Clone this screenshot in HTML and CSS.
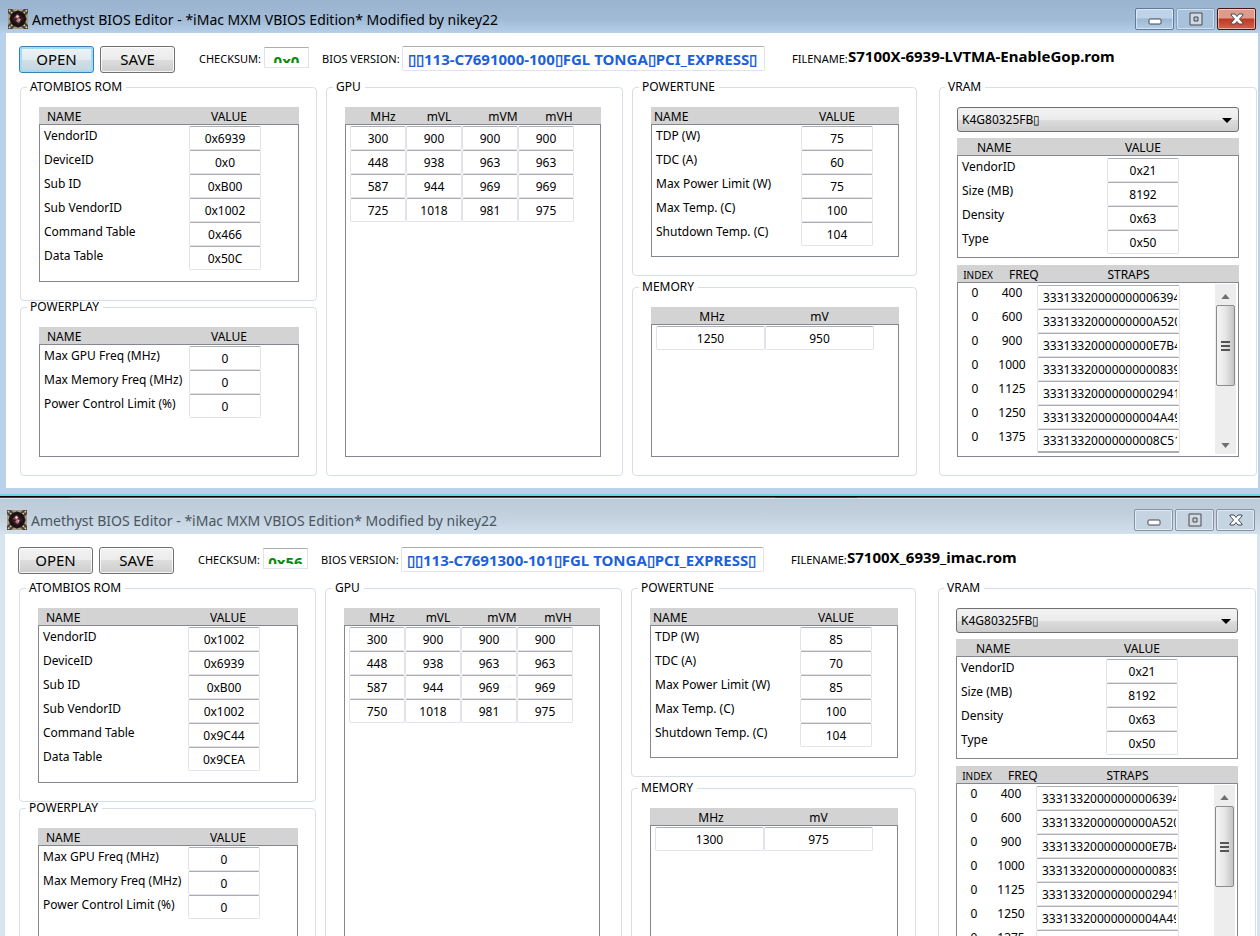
FILE: index.html
```html
<!DOCTYPE html>
<html lang="en">
<head>
<meta charset="UTF-8">
<meta name="viewport" content="width=device-width, initial-scale=1.0">
<title>Amethyst BIOS Editor</title>
<link rel="stylesheet" href="styles.css">
</head>
<body>
<main id="desktop"></main>

<script>
const TITLE = "Amethyst BIOS Editor - *iMac MXM VBIOS Edition* Modified by nikey22";

const straps = [
    [400, "33313320000000006394"],
    [600, "3331332000000000A520"],
    [900, "3331332000000000E7B4"],
    [1000, "33313320000000000839"],
    [1125, "33313320000000002941"],
    [1250, "33313320000000004A49"],
    [1375, "33313320000000008C51"]
];

const editors = [
    {
        id: "rom1",
        active: true,
        checksum: "0x0",
        version: "▯▯113-C7691000-100▯FGL TONGA▯PCI_EXPRESS▯",
        filename: "S7100X-6939-LVTMA-EnableGop.rom",
        rom: [["VendorID", "0x6939"], ["DeviceID", "0x0"], ["Sub ID", "0xB00"], ["Sub VendorID", "0x1002"], ["Command Table", "0x466"], ["Data Table", "0x50C"]],
        powerplay: [["Max GPU Freq (MHz)", "0"], ["Max Memory Freq (MHz)", "0"], ["Power Control Limit (%)", "0"]],
        gpu: [[300, 900, 900, 900], [448, 938, 963, 963], [587, 944, 969, 969], [725, 1018, 981, 975]],
        powertune: [["TDP (W)", "75"], ["TDC (A)", "60"], ["Max Power Limit (W)", "75"], ["Max Temp. (C)", "100"], ["Shutdown Temp. (C)", "104"]],
        memory: [[1250, 950]]
    },
    {
        id: "rom2",
        active: false,
        checksum: "0x56",
        version: "▯▯113-C7691300-101▯FGL TONGA▯PCI_EXPRESS▯",
        filename: "S7100X_6939_imac.rom",
        rom: [["VendorID", "0x1002"], ["DeviceID", "0x6939"], ["Sub ID", "0xB00"], ["Sub VendorID", "0x1002"], ["Command Table", "0x9C44"], ["Data Table", "0x9CEA"]],
        powerplay: [["Max GPU Freq (MHz)", "0"], ["Max Memory Freq (MHz)", "0"], ["Power Control Limit (%)", "0"]],
        gpu: [[300, 900, 900, 900], [448, 938, 963, 963], [587, 944, 969, 969], [750, 1018, 981, 975]],
        powertune: [["TDP (W)", "85"], ["TDC (A)", "70"], ["Max Power Limit (W)", "85"], ["Max Temp. (C)", "100"], ["Shutdown Temp. (C)", "104"]],
        memory: [[1300, 975]]
    }
];

const vram = [["VendorID", "0x21"], ["Size (MB)", "8192"], ["Density", "0x63"], ["Type", "0x50"]];

const appIcon = `
    <svg class="app-icon" viewBox="0 0 20 20" aria-hidden="true">
        <rect width="20" height="20" fill="#a89c84"/>
        <path d="M0 0h4l3 3 3-2 3 2 3-3h4v4l-3 3 2 3-2 3 3 3v4h-4l-3-3-3 2-3-2-3 3H0v-4l3-3-2-3 2-3-3-3z" fill="#4a4234"/>
        <path d="M1 1l4 4M19 1l-4 4M1 19l4-4M19 19l-4-4" stroke="#d8cdb2" stroke-width="1.5" stroke-dasharray="2 1"/>
        <circle cx="10" cy="10" r="8" fill="#1a1212"/>
        <path d="M10 4l6 6-6 6-6-6z" fill="#3a1a20"/>
        <path d="M9 5l3 3-3 2-3-1z" fill="#8c4a55"/>
        <path d="M10 9l3 1-2 4-3-2z" fill="#b08088"/>
        <path d="M8 7l2-1 1 2-2 1zM11 10l1 1-1 1z" fill="#f0dcdc"/>
    </svg>`;

// label / value lists
function nameTable(kind, rows, editor) {
    const body = rows.map((row, i) => {
        const id = `${editor.id}-${kind}-${i}`;
        return `<tr><td><label for="${id}">${row[0]}</label></td><td><input class="cell" id="${id}" value="${row[1]}"></td><td></td></tr>`;
    }).join("");
    return `
        <div class="list list-${kind}">
            <table>
                <colgroup><col class="col-name"><col class="col-value"><col></colgroup>
                <thead><tr><th class="th-name">NAME</th><th>VALUE</th><th></th></tr></thead>
                <tbody>${body}</tbody>
            </table>
        </div>`;
}

// plain grids of numbers
function gridTable(kind, heads, rows) {
    const body = rows.map(row =>
        `<tr>${row.map((v, i) => `<td><input class="cell" aria-label="${heads[i]}" value="${v}"></td>`).join("")}<td></td></tr>`
    ).join("");
    return `
        <div class="list list-${kind}">
            <table>
                <colgroup>${heads.map(() => `<col class="col-num">`).join("")}<col></colgroup>
                <thead><tr>${heads.map(h => `<th>${h}</th>`).join("")}<th></th></tr></thead>
                <tbody>${body}</tbody>
            </table>
        </div>`;
}

function strapsTable() {
    const body = straps.map(s =>
        `<tr><td>0</td><td>${s[0]}</td><td><input class="cell cell-strap" aria-label="Strap ${s[0]}" value="${s[1]}"></td><td></td></tr>`
    ).join("");
    return `
        <div class="list list-straps">
            <table>
                <colgroup><col class="col-index"><col class="col-freq"><col class="col-strap"><col></colgroup>
                <thead><tr><th class="th-index">INDEX</th><th class="th-freq">FREQ</th><th class="th-straps">STRAPS</th><th></th></tr></thead>
                <tbody>${body}</tbody>
            </table>
            <div class="scrollbar">
                <button class="scroll-arrow" aria-label="Scroll up"><svg viewBox="0 0 10 6"><path d="M0 6l5-6 5 6z"/></svg></button>
                <div class="scroll-thumb"><i></i><i></i><i></i></div>
                <button class="scroll-arrow scroll-down" aria-label="Scroll down"><svg viewBox="0 0 10 6"><path d="M0 0h10l-5 6z"/></svg></button>
            </div>
        </div>`;
}

function group(name, kind, content) {
    return `<fieldset class="group group-${kind}"><legend>${name}</legend>${content}</fieldset>`;
}

function renderEditor(e) {
    return `
    <section class="window ${e.active ? "window-active" : "window-inactive"}">
        <header class="titlebar">
            ${appIcon}
            <h1>${TITLE}</h1>
            <div class="window-buttons">
                <button class="wbtn" aria-label="Minimize"><svg viewBox="0 0 14 14"><rect x="1" y="7" width="12" height="5" rx="1"/></svg></button>
                <button class="wbtn wbtn-max" aria-label="Maximize"><svg viewBox="0 0 14 14"><path fill-rule="evenodd" d="M1 1h12v12H1zM5 5v4h4V5z"/></svg></button>
                <button class="wbtn wbtn-close" aria-label="Close"><svg viewBox="0 0 14 14"><path d="M1 2h4l2 2.500 2-2.500h4v1L9.500 7l3.500 4v1H9L7 9.500 5 12H1v-1l3.500-4L1 3z"/></svg></button>
            </div>
        </header>
        <div class="client">
            <div class="toolbar">
                <button class="btn btn-open">OPEN</button>
                <button class="btn">SAVE</button>
                <label class="lbl-checksum" for="${e.id}-checksum">CHECKSUM:</label>
                <div class="checksum"><div class="checksum-clip"><input id="${e.id}-checksum" value="${e.checksum}" readonly></div></div>
                <label class="lbl-version" for="${e.id}-version">BIOS VERSION:</label>
                <input class="version" id="${e.id}-version" value="${e.version}" readonly>
                <span class="lbl-file">FILENAME:</span>
                <strong class="filename">${e.filename}</strong>
            </div>
            <div class="panels">
                <div class="column">
                    ${group("ATOMBIOS ROM", "rom", nameTable("rom", e.rom, e))}
                    ${group("POWERPLAY", "powerplay", nameTable("powerplay", e.powerplay, e))}
                </div>
                <div class="column">
                    ${group("GPU", "gpu", gridTable("gpu", ["MHz", "mVL", "mVM", "mVH"], e.gpu))}
                </div>
                <div class="column column-power">
                    ${group("POWERTUNE", "powertune", nameTable("powertune", e.powertune, e))}
                    ${group("MEMORY", "memory", gridTable("memory", ["MHz", "mV"], e.memory))}
                </div>
                <div class="column column-vram">
                    ${group("VRAM", "vram", `
                        <div class="chip"><select aria-label="Memory chip"><option>K4G80325FB▯</option></select></div>
                        ${nameTable("vram", vram, e)}
                        ${strapsTable()}
                    `)}
                </div>
            </div>
        </div>
    </section>`;
}

document.getElementById("desktop").innerHTML = editors.map(renderEditor).join(`<div class="backdrop"></div>`);
</script>
</body>
</html>
```
FILE: styles.css
```css
* {
    box-sizing: border-box;
}

body {
    margin: 0;
    height: 100vh;
    overflow: hidden;
    background: #d7e4f2;
    color: #000;
    font-family: "Noto Sans", "Open Sans", sans-serif;
    font-size: 12px;
}

button, input, select {
    font-family: inherit;
    color: inherit;
}

/* window frame */
.window-active {
    padding-bottom: 6px;
    border-bottom: 2px solid #6fd3f0;
    background: #b9d1ea;
}

.window-inactive {
    background: #d7e4f2;
}

.titlebar {
    display: flex;
    align-items: flex-start;
    height: 33px;
    padding: 8px 4px 0 8px;
    background: linear-gradient(#9ab4cf, #a1bbd6 60%, #b7cfe9);
}

.window-inactive .titlebar {
    height: 36px;
    padding: 10px 5px 0 7px;
    border-top: 1px solid #dbe3ea;
    background: linear-gradient(#bdcad7, #c3d0de 50%, #d3e0ee);
    color: #4a5560;
}

.app-icon {
    width: 20px;
    height: 20px;
    margin-top: 1px;
    flex-shrink: 0;
}

.titlebar h1 {
    flex: 1;
    margin: 0 0 0 4px;
    font-size: 14px;
    font-weight: 400;
    line-height: 24px;
    white-space: nowrap;
}

.window-buttons {
    display: flex;
    gap: 2px;
}

.wbtn {
    display: flex;
    justify-content: center;
    align-items: center;
    width: 39px;
    height: 22px;
    padding: 0;
    border: 1px solid #5d7a9c;
    border-radius: 2px;
    background: linear-gradient(#bfd3e8 45%, #9db8d4 50%, #b5cde6);
    box-shadow: inset 0 0 0 1px rgba(255, 255, 255, 0.5);
}

.wbtn svg {
    width: 14px;
    height: 14px;
    fill: #fff;
    stroke: #444b55;
    stroke-width: 1;
}

.wbtn-max {
    border-color: #86a0bd;
    background: #a9c2dc;
}

.wbtn-max svg {
    fill: #d5d8dc;
}

.wbtn-close {
    border-color: #4a1410;
    background: linear-gradient(#e09a8c 45%, #bd3a22 50%, #d0634a);
}

.window-inactive .wbtn {
    border-color: #8593a5;
    background: #c6d3e1;
}

.client {
    margin: 0 2px 0 6px;
    padding: 0 1px 12px 14px;
    background: #fff;
}

.window-inactive .client {
    margin: 0 3px 0 5px;
}

.backdrop {
    height: 2px;
    background: linear-gradient(90deg, #24474f 70px, #55555d 70px, #55555d 775px, #24474f 775px, #24474f 857px, #55555d 857px);
    border-top: 1px solid #000;
}

/* toolbar */
.toolbar {
    display: flex;
    align-items: flex-start;
    height: 48px;
    padding-top: 13px;
    margin-left: -1px;
    line-height: 26px;
    white-space: nowrap;
}

.toolbar label, .lbl-file {
    flex-shrink: 0;
    font-size: 11px;
}

.btn {
    width: 75px;
    height: 27px;
    margin-right: 6px;
    padding: 0 0 2px;
    border: 1px solid #707070;
    border-radius: 3px;
    background: linear-gradient(#f3f3f3, #ebebeb 50%, #dddddd 50%, #cdcdcd);
    box-shadow: inset 0 0 0 1px rgba(255, 255, 255, 0.8);
    font-size: 15px;
}

.window-active .btn-open {
    border-color: #3c7fb1;
    background: linear-gradient(#eef3f6, #e2ebf0 50%, #d2dfe6 50%, #c4d6df);
    box-shadow: inset 0 0 0 2px #9fdcf5;
}

.lbl-checksum {
    width: 65px;
    margin-left: 18px;
}

.checksum {
    width: 45px;
    height: 21px;
    margin-top: 1px;
    border: 1px solid #e2e3ea;
    border-top-color: #abadb3;
}

.checksum-clip {
    height: 15px;
    overflow: hidden;
}

.checksum input {
    display: block;
    width: 100%;
    height: 25px;
    padding: 0;
    border: none;
    background: none;
    color: #0b8a0b;
    font-size: 15px;
    font-weight: 700;
    text-align: center;
}

.lbl-version {
    width: 80px;
    margin-left: 13px;
}

.version {
    flex: 0 1 363px;
    min-width: 0;
    height: 25px;
    padding: 0 3px 0 5px;
    border: 1px solid #e2e3ea;
    border-top-color: #abadb3;
    border-radius: 2px;
    color: #1c60dc;
    font-size: 15px;
    font-weight: 700;
}

.lbl-file {
    width: 56px;
    margin-left: 27px;
}

.filename {
    font-size: 15px;
    line-height: 20px;
}

/* panels */
.panels {
    display: grid;
    grid-template-columns: 297fr 297fr 285fr 331fr;
    column-gap: 9px;
    min-height: 395px;
}

.column {
    display: flex;
    flex-direction: column;
    min-width: 0;
}

.column-power {
    gap: 5px;
}

.column-vram {
    padding-left: 13px;
}

.group {
    display: flex;
    flex-direction: column;
    flex: 1 1 0;
    min-width: 0;
    margin: 0;
    padding: 14px 17px 18px 18px;
    border: 1px solid #d5dfe5;
    border-radius: 4px;
}

.group legend {
    margin-left: -12px;
    padding: 0 4px 0 3px;
    line-height: 12px;
}

.group-rom {
    flex: none;
}

.group-gpu {
    padding-right: 21px;
}

.group-vram {
    padding-left: 17px;
}

/* lists */
.list {
    position: relative;
    flex: 1;
    border: 1px solid #828790;
}

.list table {
    width: calc(100% + 2px);
    margin: -1px -1px 0;
    border-collapse: separate;
    border-spacing: 0;
    table-layout: fixed;
}

.list th {
    height: 18px;
    padding: 3px 0 0;
    border-bottom: 1px solid #828790;
    background: #d3d3d3;
    font-weight: 400;
    line-height: 14px;
}

.list td {
    height: 24px;
    padding: 0;
    line-height: 20px;
    vertical-align: top;
    white-space: nowrap;
}

.list tbody tr:first-child td {
    height: 25px;
    padding-top: 1px;
}

.list td label {
    padding-left: 5px;
}

.list .th-name {
    padding-left: 8px;
    text-align: left;
}

.list th + th {
    padding-left: 8px;
}

.list-rom {
    min-height: 175px;
}

.col-name {
    width: 150px;
}

.col-value {
    width: 72px;
}

.cell {
    display: block;
    width: 100%;
    height: 24px;
    padding: 1px 0 0;
    border: 1px solid #e2e3ea;
    border-top-color: #abadb3;
    border-radius: 2px;
    font-size: 12px;
    text-align: center;
}

/* first column also holds the 5px inset */
.list-gpu td:first-child, .list-memory td:first-child {
    padding-left: 5px;
}

.list-gpu .col-num {
    width: 56px;
}

.list-gpu .col-num:first-child {
    width: 61px;
}

.list-memory .col-num {
    width: 109px;
}

.list-memory .col-num:first-child {
    width: 114px;
}

.list-gpu th:first-child {
    padding-left: 15px;
}

.list-gpu th:nth-child(2) {
    padding-left: 10px;
}

.list-gpu th:nth-child(n + 3) {
    padding-left: 26px;
}

.list-memory th:first-child {
    padding-left: 8px;
}

.list-memory th + th, .list-powertune th + th, .list-vram th + th {
    padding-left: 0;
}

.list-powertune .th-name {
    padding-left: 3px;
}

.list-vram .th-name {
    padding-left: 20px;
}

.list-vram {
    flex: 0 0 120px;
    margin: 6px 0 7px;
}

.list-vram td {
    line-height: 18px;
}

.list-vram tbody tr:first-child td, .list-straps tbody tr:first-child td {
    height: 26px;
    padding-top: 2px;
}

/* memory chip picker */
.chip {
    position: relative;
}

.chip select {
    display: block;
    width: 100%;
    height: 25px;
    padding: 0 4px;
    appearance: none;
    border: 1px solid #707070;
    border-radius: 3px;
    background: linear-gradient(#f3f3f3, #ebebeb 50%, #dddddd 50%, #cdcdcd);
    font-size: 12px;
}

.chip::after {
    content: "";
    position: absolute;
    top: 11px;
    right: 7px;
    border: 5px solid transparent;
    border-top-color: #000;
    border-bottom: none;
    pointer-events: none;
}

/* straps */
.list-straps td {
    line-height: 16px;
    text-align: center;
}

.list-straps td:nth-child(2) {
    padding-right: 6px;
}

.list-straps tr:last-child .cell {
    border-bottom: 2px solid #abadb3;
}

.col-index {
    width: 36px;
}

.col-freq {
    width: 44px;
}

.col-strap {
    width: 143px;
}

.list .th-index {
    padding-left: 6px;
    font-size: 10px;
}

.list .th-freq {
    padding-left: 16px;
}

.list .th-straps {
    padding-left: 40px;
}

.cell-strap {
    padding: 0 2px 0 5px;
    text-align: left;
}

.scrollbar {
    position: absolute;
    top: 18px;
    right: 2px;
    bottom: 2px;
    display: flex;
    flex-direction: column;
    width: 21px;
    background: #ededed;
}

.scroll-arrow {
    height: 21px;
    padding: 0;
    border: none;
    background: none;
    line-height: 1;
}

.scroll-arrow svg {
    width: 9px;
    height: 5px;
    fill: #707070;
}

.scroll-down {
    margin-top: auto;
}

.scroll-thumb {
    display: flex;
    flex-direction: column;
    justify-content: center;
    align-items: center;
    gap: 2px;
    height: 81px;
    margin: 0 1px;
    border: 1px solid #8c8c8c;
    border-radius: 2px;
    background: linear-gradient(90deg, #f5f5f5, #e6e6e6 50%, #c4c4c4);
}

.scroll-thumb i {
    width: 9px;
    height: 2px;
    background: #555;
}
```
